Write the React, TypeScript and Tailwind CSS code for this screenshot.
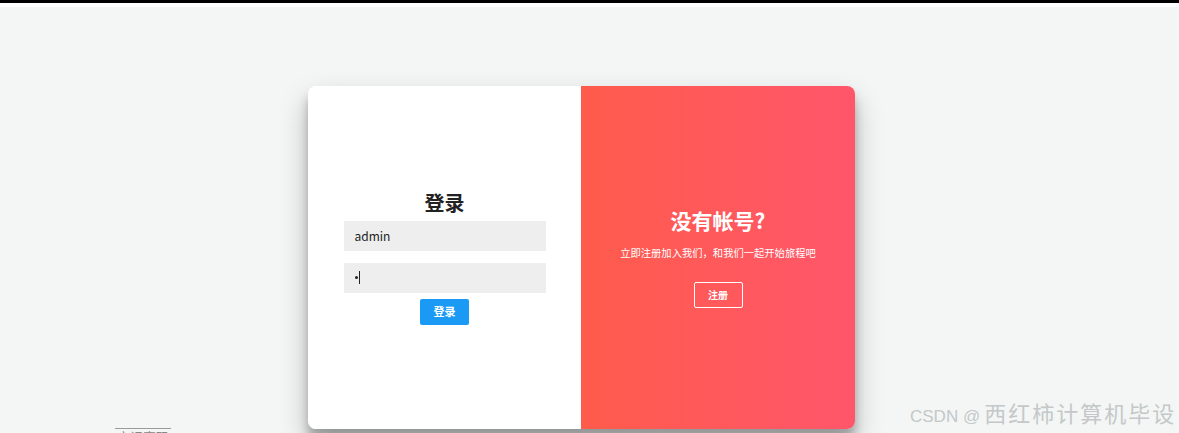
export default function App() {
  return (
    <div
      className="relative h-[433px] w-[1179px] overflow-hidden bg-[#f3f6f5]"
      style={{ fontFamily: '"Noto Sans CJK SC", "Noto Sans", sans-serif' }}
    >
      <div className="h-[3px] bg-black" />
      <div className="h-[4px] bg-white" />

      {/* card */}
      <div className="ml-[308px] mt-[79px] flex h-[343px] w-[547px] rounded-[8px] shadow-[0_14px_28px_rgba(0,0,0,0.25),0_10px_10px_rgba(0,0,0,0.22)]">
        {/* login */}
        <div className="flex w-[273px] flex-col items-center justify-center rounded-l-[8px] bg-white px-[35px]">
          <h1 className="text-[20px] font-bold leading-[24px] text-[#222]">登录</h1>
          <input
            className="mt-[6px] h-[30px] w-[202px] bg-[#eeeeee] px-[11px] text-[12px] text-[#222] outline-none"
            defaultValue="admin"
          />
          <div className="mt-[12px] flex h-[30px] w-[202px] items-center bg-[#eeeeee] pl-[11px]">
            <span className="h-[3px] w-[3px] rounded-full bg-[#222]" />
            <span className="ml-[1px] h-[13px] w-[1px] bg-[#222]" />
          </div>
          <button className="mt-[6px] h-[26px] w-[49px] rounded-[2px] bg-[#1a9af5] text-[11px] font-bold text-white">
            登录
          </button>
        </div>

        {/* register */}
        <div className="flex flex-1 flex-col items-center justify-center rounded-r-[8px] bg-gradient-to-r from-[#ff5b4b] to-[#ff566a] text-white">
          <h1 className="text-[21px] font-bold leading-[24px]">没有帐号?</h1>
          <p className="mt-[14px] text-[10.3px] leading-[14px]">立即注册加入我们，和我们一起开始旅程吧</p>
          <button className="mt-[22px] h-[26px] w-[49px] rounded-[2px] border border-white text-[10px] font-bold">
            注册
          </button>
        </div>
      </div>

      <div className="absolute left-[115px] top-[428px] border-t border-[#9a9a9a] px-[2px] text-[13px] leading-[16px] text-[#888]">
        忘记密码
      </div>

      <div className="absolute left-[910px] top-[397px] flex w-[269px] items-baseline whitespace-nowrap text-[#c4c8c8]">
        <span className="text-[17px] leading-[30px]" style={{ fontFamily: '"Liberation Sans", sans-serif' }}>
          CSDN @
        </span>
        <span className="ml-[4px] text-[22px] leading-[30px] tracking-[2px]">西红柿计算机毕设</span>
      </div>
    </div>
  );
}
